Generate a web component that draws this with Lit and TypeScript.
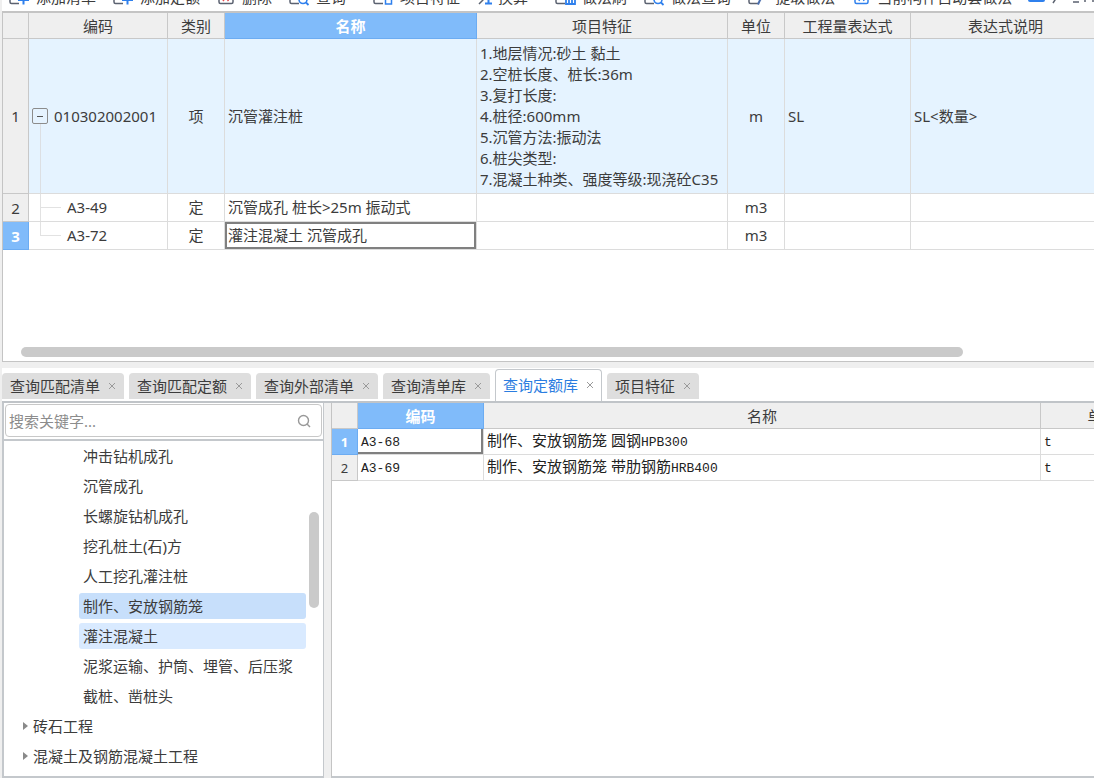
import { LitElement, html, css, svg } from "lit";
import { customElement, state } from "lit/decorators.js";
import { classMap } from "lit/directives/class-map.js";

interface Tool {
  icon: string;
  label: string;
  wide?: boolean;
}

interface BillRow {
  code: string;
  kind: string;
  name: string;
  features: string[];
  unit: string;
  expr: string;
  note: string;
}

const page = svg`<path d="M16 4V3H3.5A1.5 1.5 0 0 0 2 4.500V17A1.5 1.5 0 0 0 3.500 18.500H11" fill="none" stroke="#5b6270" stroke-width="1.5"/>`;

const glyphs: Record<string, unknown> = {
  add: svg`${page}<path d="M15.500 9V19.500M10 15H21" stroke="#2f80ed" stroke-width="2" fill="none"/>`,
  remove: svg`<rect x="3" y="3" width="14" height="15.500" rx="1.500" fill="none" stroke="#5b6270" stroke-width="1.500"/><path d="M7 8L12.500 16M12.500 8L7 16" stroke="#e5484d" stroke-width="1.500"/>`,
  search: svg`${page}<circle cx="15" cy="14.500" r="4" fill="none" stroke="#2f80ed" stroke-width="1.600"/><path d="M18 17.500L20.500 20" stroke="#2f80ed" stroke-width="1.800"/>`,
  feature: svg`${page}<path d="M12 14L16.500 9L21 14H19.500V19H13.500V14Z" fill="none" stroke="#2f80ed" stroke-width="1.500"/>`,
  convert: svg`<path d="M0 14H7M7 8V15L3 19" stroke="#5b6270" stroke-width="1.500" fill="none"/><path d="M9 18.500H16M12.500 18V9L9 12" stroke="#2f80ed" stroke-width="2" fill="none"/>`,
  brush: svg`${page}<path d="M12 12H21V19H12ZM15 14V18.500M18 14V18.500" fill="none" stroke="#2f80ed" stroke-width="1.800"/>`,
  extract: svg`${page}<path d="M11 19.500L13 15L19 9" stroke="#4b6fae" stroke-width="2" fill="none"/>`,
  auto: svg`<rect x="4" y="4" width="13" height="14.500" rx="1.500" fill="none" stroke="#2f80ed" stroke-width="1.500"/><path d="M8 16L10.500 9L13 16" fill="none" stroke="#2f80ed" stroke-width="1.400"/>`,
};

const tools: Tool[] = [
  { icon: "add", label: "添加清单" },
  { icon: "add", label: "添加定额" },
  { icon: "remove", label: "删除" },
  { icon: "search", label: "查询", wide: true },
  { icon: "feature", label: "项目特征" },
  { icon: "convert", label: "换算", wide: true },
  { icon: "brush", label: "做法刷" },
  { icon: "search", label: "做法查询" },
  { icon: "extract", label: "提取做法" },
  { icon: "auto", label: "当前构件自动套做法" },
];

const billRows: BillRow[] = [
  {
    code: "010302002001",
    kind: "项",
    name: "沉管灌注桩",
    features: [
      "1.地层情况:砂土 黏土",
      "2.空桩长度、桩长:36m",
      "3.复打长度:",
      "4.桩径:600mm",
      "5.沉管方法:振动法",
      "6.桩尖类型:",
      "7.混凝土种类、强度等级:现浇砼C35",
    ],
    unit: "m",
    expr: "SL",
    note: "SL<数量>",
  },
  { code: "A3-49", kind: "定", name: "沉管成孔 桩长>25m 振动式", features: [], unit: "m3", expr: "", note: "" },
  { code: "A3-72", kind: "定", name: "灌注混凝土 沉管成孔", features: [], unit: "m3", expr: "", note: "" },
];

const tabs = ["查询匹配清单", "查询匹配定额", "查询外部清单", "查询清单库", "查询定额库", "项目特征"];

const leaves = [
  "冲击钻机成孔",
  "沉管成孔",
  "长螺旋钻机成孔",
  "挖孔桩土(石)方",
  "人工挖孔灌注桩",
  "制作、安放钢筋笼",
  "灌注混凝土",
  "泥浆运输、护筒、埋管、后压浆",
  "截桩、凿桩头",
];

const groups = ["砖石工程", "混凝土及钢筋混凝土工程"];

const quotas = [
  { code: "A3-68", name: "制作、安放钢筋笼 圆钢", grade: "HPB300", unit: "t" },
  { code: "A3-69", name: "制作、安放钢筋笼 带肋钢筋", grade: "HRB400", unit: "t" },
];

const base = css`
  :host {
    box-sizing: border-box;
    color: #3c3c3c;
    font: 15px/20px "Noto Sans", "Noto Sans CJK SC", sans-serif;
  }
  * {
    box-sizing: border-box;
  }
  button,
  input {
    margin: 0;
    padding: 0;
    border: 0;
    background: none;
    font: inherit;
    color: inherit;
  }
  table {
    border-collapse: separate;
    border-spacing: 0;
    table-layout: fixed;
  }
  th,
  td {
    padding: 0 3px;
    border-right: 1px solid #dcdcdc;
    border-bottom: 1px solid #dcdcdc;
    text-align: left;
    font-weight: 400;
    white-space: nowrap;
    overflow: hidden;
  }
  thead th {
    background: #efefef;
    border-color: #c8c8c8;
    text-align: center;
  }
  tbody th {
    background: #efefef;
    border-color: #c8c8c8;
    text-align: center;
  }
  thead th.on,
  tbody th.on {
    background: #80bbfa;
    border-color: #6cacf2;
    color: #fff;
    font-weight: 700;
  }
`;

@customElement("tool-strip")
class ToolStrip extends LitElement {
  static styles = [
    base,
    css`
      :host {
        display: flex;
        align-items: flex-end;
        height: 11px;
        padding-left: 6px;
        background: #fff;
        overflow: hidden;
      }
      .tool {
        display: flex;
        flex: none;
        align-items: flex-end;
        gap: 6px;
        margin-right: 16px;
        white-space: nowrap;
      }
      .icon {
        width: 22px;
        height: 22px;
        margin-bottom: 4px;
      }
      .label {
        height: 20px;
        margin-bottom: 4px;
      }
      .narrow .icon {
        width: 20px;
      }
      .tight {
        gap: 4px;
      }
      .tight .icon {
        width: 18px;
      }
      .roomy {
        margin-right: 26px;
      }
      .switch {
        appearance: none;
        flex: none;
        width: 17px;
        height: 15px;
        margin: 0 6px 9px 0;
        border-radius: 2px;
        background: #2f80ed;
      }
      .marks {
        flex: none;
        width: 46px;
        height: 14px;
        margin-bottom: 7px;
      }
    `,
  ];

  render() {
    return html`
      ${tools.map((t) => {
        const narrow = ["remove", "auto"].includes(t.icon);
        const tight = t.icon === "convert";
        return html`<button
          class=${classMap({ tool: true, narrow, tight, roomy: !!t.wide })}
        >
          <svg class="icon" viewBox="0 0 ${narrow ? 20 : tight ? 18 : 22} 22">${glyphs[t.icon]}</svg>
          <span class="label">${t.label}</span>
        </button>`;
      })}
      <input class="switch" type="checkbox" role="switch" aria-label="当前构件自动套做法" checked />
      <svg class="marks" viewBox="0 0 46 14" aria-hidden="true">
        <path d="M4 2V10L2 13M22 12H28M34 2V12M42 2V12" fill="none" stroke="#5b6270" stroke-width="1.500" />
      </svg>
    `;
  }
}

@customElement("bill-table")
class BillTable extends LitElement {
  static styles = [
    base,
    css`
      :host {
        display: flex;
        flex-direction: column;
        justify-content: space-between;
        min-height: 0;
        border: 1px solid #c4c4c4;
        border-top-width: 2px;
        border-right: 0;
        background: #fff;
        overflow: hidden;
      }
      table {
        width: 100%;
      }
      .c-num {
        width: 26px;
      }
      .c-code {
        width: 139px;
      }
      .c-short {
        width: 57px;
      }
      .c-name {
        width: 252px;
      }
      .c-feat {
        width: 251px;
      }
      .c-expr {
        width: 126px;
      }
      thead th {
        height: 26px;
      }
      th:last-child {
        padding-left: 9px;
      }
      th:last-child,
      td:last-child {
        border-right: 0;
      }
      tbody tr {
        height: 28px;
      }
      tbody th {
        padding: 0;
      }
      .child td {
        padding-bottom: 2px;
      }
      .parent td {
        background: #e5f3ff;
      }
      .parent .feat {
        padding: 4px 3px 3px;
      }
      .feat {
        line-height: 21px;
      }
      .line {
        display: block;
      }
      .mid {
        text-align: center;
      }
      .child .code {
        padding-left: 38px;
        background:
          linear-gradient(#e2e2e2, #e2e2e2) 11px 0 / 1px 100% no-repeat,
          linear-gradient(#e2e2e2, #e2e2e2) 11px 50% / 21px 1px no-repeat;
      }
      .child.last .code {
        background:
          linear-gradient(#e2e2e2, #e2e2e2) 11px 0 / 1px 50% no-repeat,
          linear-gradient(#e2e2e2, #e2e2e2) 11px 50% / 21px 1px no-repeat;
      }
      .parent .code {
        background: linear-gradient(#dcdfe3, #dcdfe3) 11px 100% / 1px 45% no-repeat #e5f3ff;
      }
      .node {
        display: flex;
        align-items: center;
        gap: 6px;
      }
      .fold {
        display: grid;
        place-items: center;
        width: 16px;
        height: 16px;
        border: 1px solid #8c8c8c;
        border-radius: 2px;
      }
      .fold::before {
        content: "";
        width: 6px;
        height: 1px;
        background: #555;
      }
      .cursor {
        box-shadow: inset 0 0 0 2px #808080;
      }
      .track {
        padding: 0 12% 4px 18px;
      }
      .thumb {
        height: 10px;
        border-radius: 5px;
        background: #cacaca;
      }
    `,
  ];

  render() {
    return html`
      <table>
        <colgroup>
          <col class="c-num" />
          <col class="c-code" />
          <col class="c-short" />
          <col class="c-name" />
          <col class="c-feat" />
          <col class="c-short" />
          <col class="c-expr" />
          <col />
        </colgroup>
        <thead>
          <tr>
            <th></th>
            <th>编码</th>
            <th>类别</th>
            <th class="on">名称</th>
            <th>项目特征</th>
            <th>单位</th>
            <th>工程量表达式</th>
            <th>表达式说明</th>
          </tr>
        </thead>
        <tbody>
          ${billRows.map((r, i) => {
            const parent = i === 0;
            const last = i === billRows.length - 1;
            return html`<tr class=${classMap({ parent, child: !parent, last })}>
              <th scope="row" class=${classMap({ on: last })}>${i + 1}</th>
              <td class="code">
                ${parent
                  ? html`<span class="node"><button class="fold" aria-label="折叠"></button>${r.code}</span>`
                  : r.code}
              </td>
              <td class="mid">${r.kind}</td>
              <td class=${classMap({ cursor: last })}>${r.name}</td>
              <td class="feat">${r.features.map((f) => html`<span class="line">${f}</span>`)}</td>
              <td class="mid">${r.unit}</td>
              <td>${r.expr}</td>
              <td>${r.note}</td>
            </tr>`;
          })}
        </tbody>
      </table>
      <div class="track"><div class="thumb"></div></div>
    `;
  }
}

@customElement("query-tabs")
class QueryTabs extends LitElement {
  @state() current = 4;

  static styles = [
    base,
    css`
      :host {
        display: flex;
        align-items: flex-end;
        gap: 5px;
        height: 33px;
        background: #fff;
      }
      .tab {
        display: flex;
        align-items: center;
        gap: 8px;
        height: 26px;
        margin-bottom: 2px;
        padding: 0 8px 0 7px;
        border-radius: 4px 4px 0 0;
        background: #dedede;
        white-space: nowrap;
      }
      .tab:first-child {
        padding-right: 9px;
      }
      .tab.active {
        height: 32px;
        margin-bottom: 0;
        padding: 0 7px 1px;
        border: 1px solid #c4c8cc;
        border-bottom: 0;
        background: #fff;
        color: #2b7de0;
      }
      .tab:not(.active) {
        padding: 0 8px;
      }
      .close {
        display: flex;
      }
      .cross {
        width: 8px;
        height: 8px;
      }
    `,
  ];

  render() {
    return tabs.map(
      (t, i) => html`<div class=${classMap({ tab: true, active: i === this.current })}>
        <button @click=${() => (this.current = i)}>${t}</button>
        <button class="close" aria-label="关闭${t}">
          <svg class="cross" viewBox="0 0 8 8"><path d="M1 1L7 7M7 1L1 7" stroke="#9a9a9a" /></svg>
        </button>
      </div>`,
    );
  }
}

@customElement("chapter-tree")
class ChapterTree extends LitElement {
  static styles = [
    base,
    css`
      :host {
        display: flex;
        flex-direction: column;
        width: 322px;
        border: 2px solid #c4c8cc;
        border-width: 0 1px 2px 2px;
        background: #fff;
        overflow: hidden;
      }
      .finder {
        flex: none;
        padding: 1px 1px 2px;
        border-bottom: 2px solid #c4c8cc;
      }
      .box {
        display: flex;
        align-items: center;
        height: 33px;
        padding: 0 10px 0 3px;
        border: 1px solid #c8c8c8;
        border-radius: 4px;
      }
      .query {
        flex: 1;
        min-width: 0;
        outline: 0;
      }
      .query::placeholder {
        color: #8c8c8c;
        opacity: 1;
      }
      .lens {
        width: 14px;
        height: 14px;
      }
      .body {
        display: flex;
        flex: 1;
        min-height: 0;
      }
      .list {
        display: flex;
        flex: 1;
        flex-direction: column;
        gap: 4px;
        padding: 2px 3px 0 19px;
        margin: 0;
        list-style: none;
      }
      .row {
        width: 100%;
        height: 26px;
        padding: 0 4px;
        border-radius: 3px;
        text-align: left;
        white-space: nowrap;
      }
      .leaf {
        padding-left: 56px;
      }
      .chosen {
        background: #c7dffb;
      }
      .hover {
        background: #d9eaff;
      }
      .group {
        display: flex;
        align-items: center;
        gap: 5px;
        padding: 0;
      }
      .arrow {
        width: 5px;
        height: 8px;
      }
      .bar {
        flex: none;
        width: 14px;
        padding: 71px 4px 0 0;
      }
      .thumb {
        height: 96px;
        border-radius: 5px;
        background: #cacaca;
      }
    `,
  ];

  render() {
    return html`
      <div class="finder">
        <label class="box">
          <input class="query" type="text" placeholder="搜索关键字..." aria-label="搜索关键字" />
          <svg class="lens" viewBox="0 0 14 14" fill="none" stroke="#999" stroke-width="1.4">
            <circle cx="6.500" cy="6.500" r="5" />
            <path d="M10 10L13 13" />
          </svg>
        </label>
      </div>
      <div class="body">
        <ul class="list">
          ${leaves.map(
            (t, i) => html`<li class="leaf">
              <button class=${classMap({ row: true, chosen: i === 5, hover: i === 6 })}>${t}</button>
            </li>`,
          )}
          ${groups.map(
            (t) => html`<li>
              <button class="row group">
                <svg class="arrow" viewBox="0 0 5 8"><path d="M0 0L5 4L0 8Z" fill="#8a8a8a" /></svg>${t}
              </button>
            </li>`,
          )}
        </ul>
        <div class="bar"><div class="thumb"></div></div>
      </div>
    `;
  }
}

@customElement("quota-table")
class QuotaTable extends LitElement {
  static styles = [
    base,
    css`
      :host {
        display: block;
        min-width: 0;
        border-left: 1px solid #c4c4c4;
        border-bottom: 2px solid #c4c8cc;
        background: #fff;
        overflow: hidden;
      }
      table {
        width: calc(100% + 71px);
      }
      .c-num {
        width: 26px;
      }
      .c-code {
        width: 126px;
      }
      .c-unit {
        width: 124px;
      }
      tr {
        height: 26px;
      }
      td {
        color: #222;
      }
      tbody th {
        padding: 0;
        font-size: 13px;
      }
      .mono {
        font-family: "Liberation Mono", monospace;
        font-size: 13px;
      }
      .cursor {
        box-shadow: inset -2px -2px 0 #808080;
      }
    `,
  ];

  render() {
    return html`<table>
      <colgroup>
        <col class="c-num" />
        <col class="c-code" />
        <col />
        <col class="c-unit" />
      </colgroup>
      <thead>
        <tr>
          <th></th>
          <th class="on">编码</th>
          <th>名称</th>
          <th>单位</th>
        </tr>
      </thead>
      <tbody>
        ${quotas.map(
          (q, i) => html`<tr>
            <th scope="row" class=${classMap({ on: i === 0 })}>${i + 1}</th>
            <td class=${classMap({ cursor: i === 0 })}><span class="mono">${q.code}</span></td>
            <td>${q.name}<span class="mono">${q.grade}</span></td>
            <td><span class="mono">${q.unit}</span></td>
          </tr>`,
        )}
      </tbody>
    </table>`;
  }
}

@customElement("app-root")
class AppRoot extends LitElement {
  static styles = css`
    :host {
      display: grid;
      grid-template-rows: 362fr 416fr;
      height: 100vh;
      padding-left: 2px;
      box-sizing: border-box;
      background: #efefef;
      overflow: hidden;
    }
    .upper,
    .lower {
      display: flex;
      flex-direction: column;
      min-width: 0;
      min-height: 0;
    }
    .upper tool-strip,
    .lower query-tabs {
      flex: none;
    }
    .upper bill-table {
      flex: 1;
    }
    .lower {
      padding-top: 6px;
    }
    .split {
      display: grid;
      grid-template-columns: auto 1fr;
      gap: 7px;
      flex: 1;
      min-height: 0;
      border-top: 2px solid #c0c4c8;
    }
  `;

  render() {
    return html`
      <section class="upper">
        <tool-strip></tool-strip>
        <bill-table></bill-table>
      </section>
      <section class="lower">
        <query-tabs></query-tabs>
        <div class="split">
          <chapter-tree></chapter-tree>
          <quota-table></quota-table>
        </div>
      </section>
    `;
  }
}
